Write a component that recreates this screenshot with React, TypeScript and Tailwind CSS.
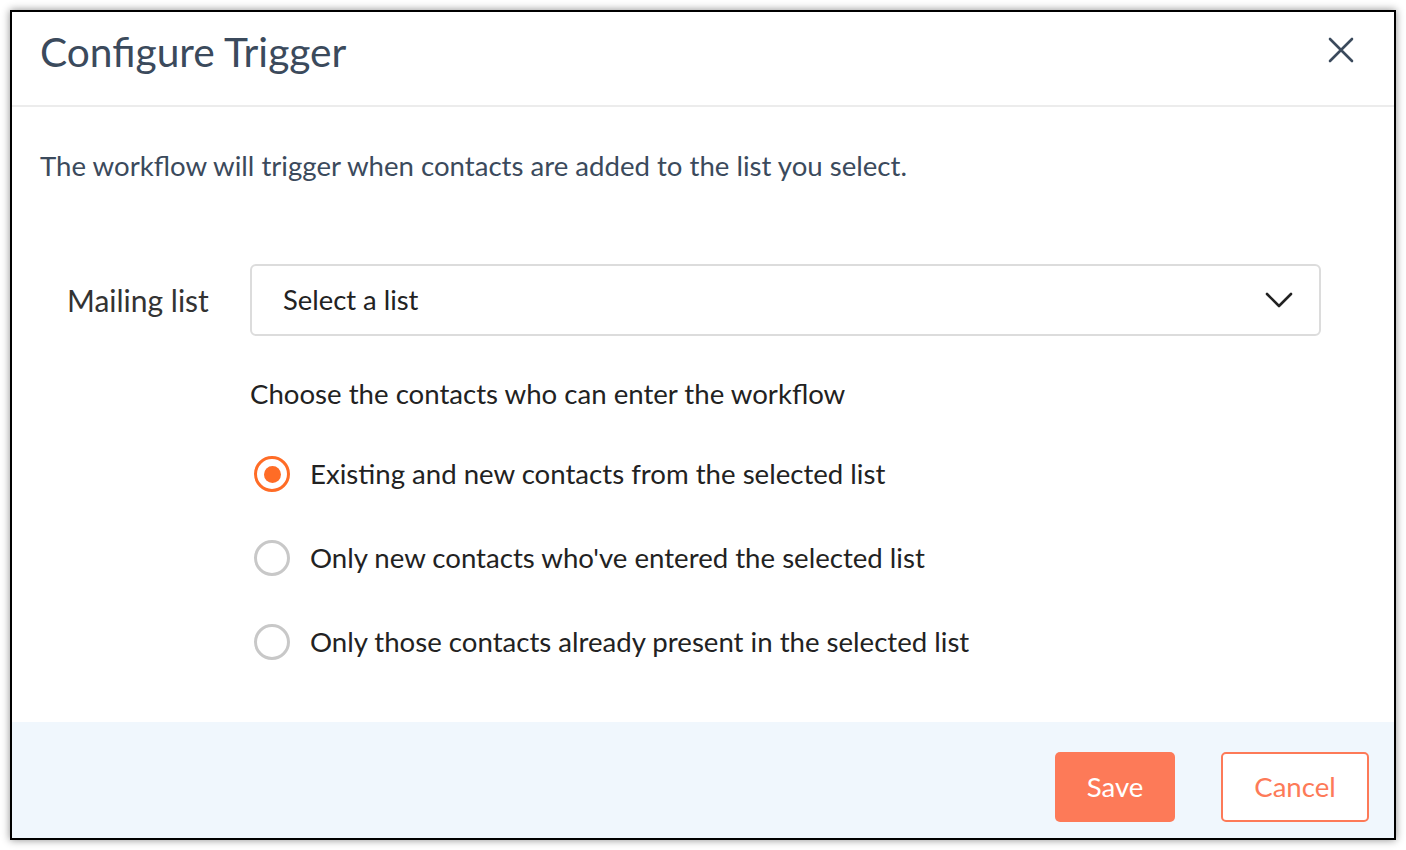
import React, { useState } from 'react';

const options = [
  'Existing and new contacts from the selected list',
  "Only new contacts who've entered the selected list",
  'Only those contacts already present in the selected list',
];

export default function App() {
  const [selected, setSelected] = useState(0);

  return (
    <div className="h-[850px] w-[1406px] bg-white p-[10px]" style={{ fontFamily: 'Lato, "Noto Sans", sans-serif' }}>
      <div className="flex h-[830px] w-[1386px] flex-col border-2 border-black bg-white shadow-[0_0_8px_rgba(0,0,0,0.45)]">
        {/* header */}
        <div className="flex h-[95px] shrink-0 items-center justify-between border-b-2 border-[#ececec] pb-[12px] pl-[28px] pr-[40px]">
          <h2 className="text-[40.7px] leading-none text-[#3b4a5c]">Configure Trigger</h2>
          <button className="mb-[6px] text-[#3b4a5c]">
            <svg width="26" height="26" viewBox="0 0 26 26" fill="none" stroke="currentColor" strokeWidth="2.6" strokeLinecap="round">
              <path d="M2 2L24 24M24 2L2 24" />
            </svg>
          </button>
        </div>

        {/* body */}
        <div className="flex-1 pl-[28px] pr-[73px]">
          <p className="mt-[42px] text-[27.6px] leading-[34px] text-[#3b4a5c]">
            The workflow will trigger when contacts are added to the list you select.
          </p>

          <div className="mt-[81px] flex items-center">
            <label className="w-[210px] pl-[27px] text-[30px] text-[#333]">Mailing list</label>
            <div className="flex h-[72px] flex-1 items-center justify-between rounded-[6px] border-2 border-[#dcdcdc] pl-[31px] pr-[26px]">
              <span className="text-[27.4px] text-[#222]">Select a list</span>
              <svg width="28" height="16" viewBox="0 0 28 16" fill="none" stroke="#222" strokeWidth="2.6" strokeLinecap="round" strokeLinejoin="round">
                <path d="M2 2L14 14L26 2" />
              </svg>
            </div>
          </div>

          <div className="ml-[210px] mt-[41px]">
            <p className="text-[27.6px] leading-[34px] text-[#222]">Choose the contacts who can enter the workflow</p>
            <div className="mt-[45px] flex flex-col gap-[48px]">
              {options.map((o, i) => (
                <button key={o} onClick={() => setSelected(i)} className="flex items-center gap-[20px] text-left">
                  {selected === i ? (
                    <span className="ml-[4px] flex h-[36px] w-[36px] items-center justify-center rounded-full border-[3.5px] border-[#ff6c26]">
                      <span className="h-[17px] w-[17px] rounded-full bg-[#ff6c26]" />
                    </span>
                  ) : (
                    <span className="ml-[4px] h-[36px] w-[36px] rounded-full border-[3.5px] border-[#c8c8c8]" />
                  )}
                  <span className="text-[27.6px] leading-[36px] text-[#222]">{o}</span>
                </button>
              ))}
            </div>
          </div>
        </div>

        {/* footer */}
        <div className="flex h-[116px] shrink-0 items-start justify-end gap-[46px] bg-[#f0f7fd] pr-[25px] pt-[30px]">
          <button className="h-[70px] w-[120px] rounded-[5px] bg-[#fd7a58] text-[27.6px] text-white">Save</button>
          <button className="h-[70px] w-[148px] rounded-[5px] border-2 border-[#fd7a58] bg-white text-[27.6px] text-[#fd7a58]">Cancel</button>
        </div>
      </div>
    </div>
  );
}
